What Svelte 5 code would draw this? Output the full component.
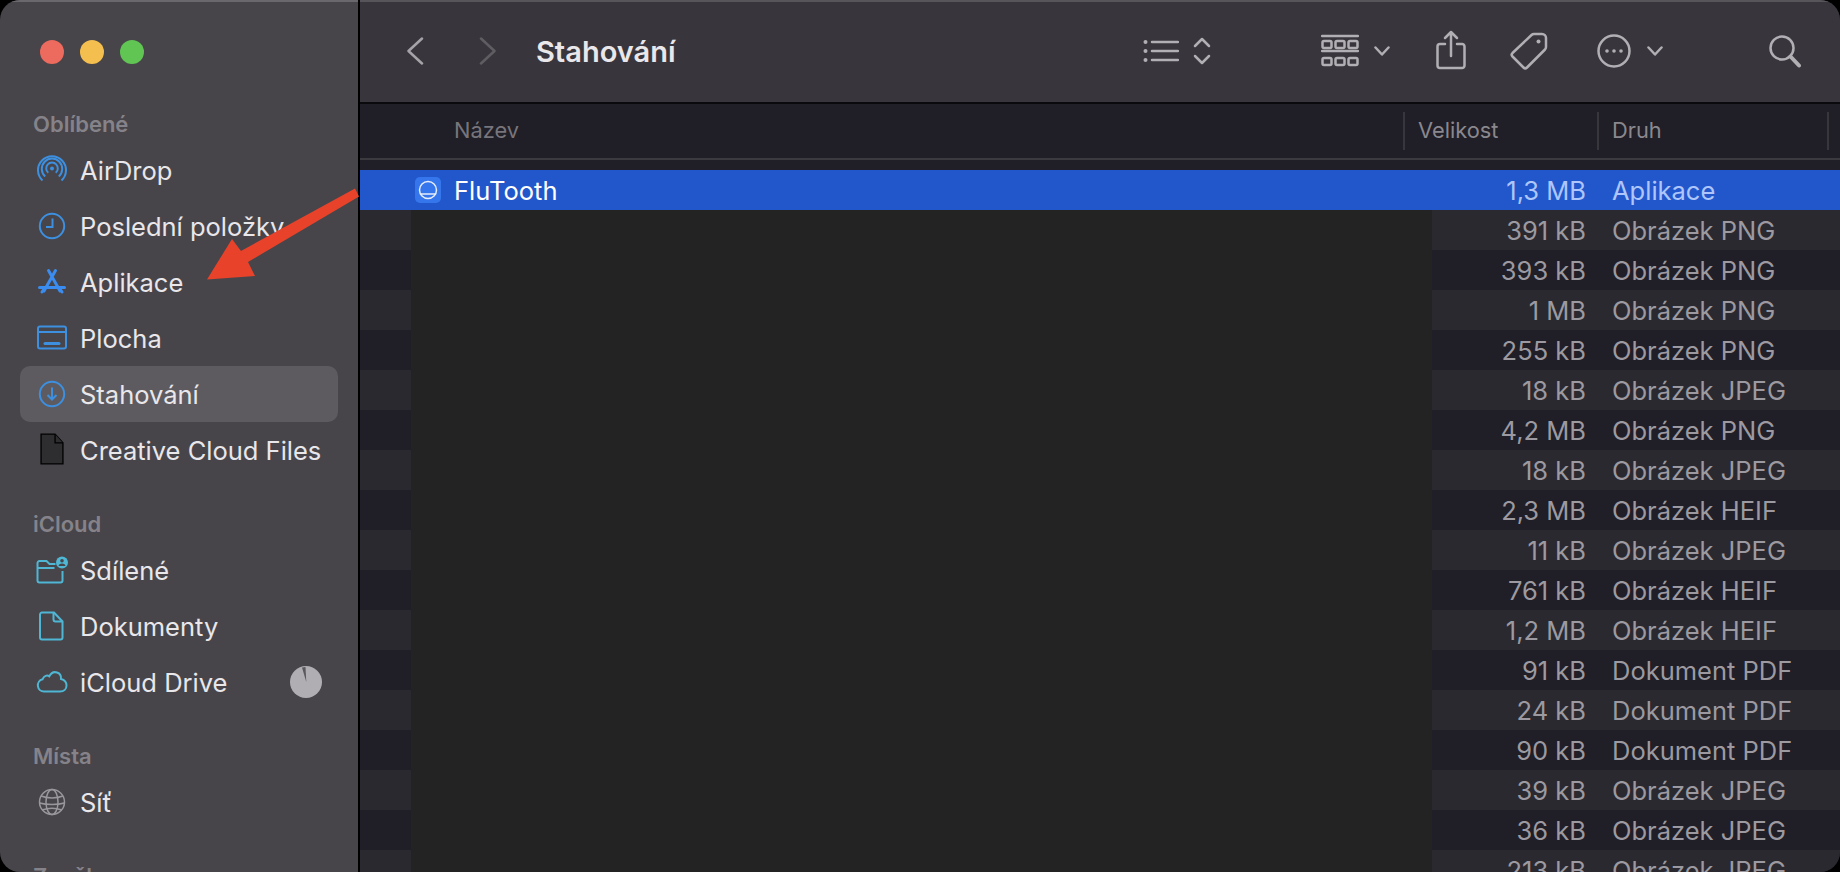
<script lang="ts">
	const files = [
		['391 kB', 'Obrázek PNG'],
		['393 kB', 'Obrázek PNG'],
		['1 MB', 'Obrázek PNG'],
		['255 kB', 'Obrázek PNG'],
		['18 kB', 'Obrázek JPEG'],
		['4,2 MB', 'Obrázek PNG'],
		['18 kB', 'Obrázek JPEG'],
		['2,3 MB', 'Obrázek HEIF'],
		['11 kB', 'Obrázek JPEG'],
		['761 kB', 'Obrázek HEIF'],
		['1,2 MB', 'Obrázek HEIF'],
		['91 kB', 'Dokument PDF'],
		['24 kB', 'Dokument PDF'],
		['90 kB', 'Dokument PDF'],
		['39 kB', 'Obrázek JPEG'],
		['36 kB', 'Obrázek JPEG'],
		['213 kB', 'Obrázek JPEG']
	];
</script>

<div class="window">
	<aside class="sidebar">
		<div class="lights">
			<span class="light red"></span>
			<span class="light yellow"></span>
			<span class="light green"></span>
		</div>

		<div class="section first">Oblíbené</div>
		<div class="item">
			<svg class="icon blue" viewBox="0 0 32 32">
				<circle class="blue-fill" cx="16" cy="14.500" r="2" />
				<path d="M12.300 18.800a5.800 5.800 0 1 1 7.400 0" />
				<path d="M9.200 22.400a10.200 10.200 0 1 1 13.600 0" />
				<path d="M6.500 26.500a14 14 0 1 1 19 0" />
			</svg>
			AirDrop
		</div>
		<div class="item">
			<svg class="icon blue" viewBox="0 0 32 32">
				<circle cx="16" cy="16" r="12.200" />
				<path d="M16.500 8.500V17H10" />
			</svg>
			Poslední položky
		</div>
		<div class="item">
			<svg class="icon bright" viewBox="0 0 32 32">
				<path class="thick" d="M12.500 4.500L24 25M19.500 4.500L8 25" />
				<path class="thick" d="M3.500 21.500h25" />
				<path class="thick" d="M6 26l2-3M26 26l-2-3" />
			</svg>
			Aplikace
		</div>
		<div class="item">
			<svg class="icon blue" viewBox="0 0 32 32">
				<rect x="2" y="4.500" width="28" height="22" rx="2" />
				<path d="M2 10h28" />
				<path class="thick" d="M9 21.500h14" />
			</svg>
			Plocha
		</div>
		<div class="item active">
			<svg class="icon blue" viewBox="0 0 32 32">
				<circle cx="16" cy="16" r="12.200" />
				<path d="M16 9.500v12M11.500 17l4.500 4.500 4.500-4.500" />
			</svg>
			Stahování
		</div>
		<div class="item">
			<svg class="icon doc" viewBox="0 0 32 36">
				<path d="M3.500 1h16l9 10v24h-25z" />
				<path d="M19.500 1v10h9" />
			</svg>
			Creative Cloud Files
		</div>

		<div class="section">iCloud</div>
		<div class="item">
			<svg class="icon teal" viewBox="0 0 32 32">
				<path d="M26.500 17v9.500a2 2 0 0 1-2 2H3.500a2 2 0 0 1-2-2V9a2 2 0 0 1 2-2h7l3 3h6M1.500 14h17" />
				<circle class="fill" cx="26" cy="8.500" r="6" />
				<circle class="cut" cx="26" cy="6.800" r="1.800" />
				<path class="cut" d="M22.500 12c.6-1.800 1.900-2.500 3.500-2.500s2.900.7 3.500 2.500z" />
			</svg>
			Sdílené
		</div>
		<div class="item">
			<svg class="icon teal" viewBox="0 0 32 32">
				<path d="M6 2.500h12l8.500 9v16a2 2 0 0 1-2 2H6a2 2 0 0 1-2-2v-23a2 2 0 0 1 2-2z" />
				<path d="M17.500 2.500v7a2 2 0 0 0 2 2h7" />
			</svg>
			Dokumenty
		</div>
		<div class="item">
			<svg class="icon teal" viewBox="0 0 32 32">
				<path d="M8 25.500a6.200 6.200 0 0 1-1.500-12.200C8 9.800 11 8.800 13.300 10.300 15 7 18 5.500 21 6.500c2.800.9 4.300 3.500 4 6.500 3 .8 5.500 3 5.500 6.500 0 3.500-2.500 6-6.500 6z" />
			</svg>
			iCloud Drive
			<svg class="pie" viewBox="0 0 32 32">
				<circle cx="16" cy="16" r="16" />
				<path d="M12 1.500l3.500-.5.800 15z" />
			</svg>
		</div>

		<div class="section">Místa</div>
		<div class="item">
			<svg class="icon grey" viewBox="0 0 32 32">
				<circle cx="16" cy="16" r="12.500" />
				<ellipse cx="16" cy="16" rx="6" ry="12.500" />
				<path d="M5 10c6 2.500 16 2.500 22 0M3.500 17c7 2 18 2 25 0M6 24c6-2 14-2 20 0" />
			</svg>
			Síť
		</div>

		<div class="section">Značky</div>
	</aside>

	<main class="main">
		<header class="toolbar">
			<svg class="back" viewBox="0 0 18 28"><path d="M16 1.500L2.500 14 16 26.500" /></svg>
			<svg class="forward" viewBox="0 0 18 28"><path d="M2 1.500L15.500 14 2 26.500" /></svg>
			<h1>Stahování</h1>

			<svg class="tool list" viewBox="0 0 36 26">
				<circle class="dot" cx="2.500" cy="4" r="2" />
				<circle class="dot" cx="2.500" cy="13" r="2" />
				<circle class="dot" cx="2.500" cy="22" r="2" />
				<path d="M9 4h26M9 13h26M9 22h26" />
			</svg>
			<svg class="tool updown" viewBox="0 0 18 28"><path d="M2 9l7-7 7 7M2 19l7 7 7-7" /></svg>
			<svg class="tool view" viewBox="0 0 38 34">
				<path d="M1 2h36M1 17h36" />
				<rect x="1.500" y="7" width="9" height="7" rx="1.500" />
				<rect x="14.500" y="7" width="9" height="7" rx="1.500" />
				<rect x="27.500" y="7" width="9" height="7" rx="1.500" />
				<rect x="1.500" y="24" width="9" height="7" rx="1.500" />
				<rect x="14.500" y="24" width="9" height="7" rx="1.500" />
				<rect x="27.500" y="24" width="9" height="7" rx="1.500" />
			</svg>
			<svg class="tool chev view-chev" viewBox="0 0 16 10"><path d="M1.500 1.500L8 8.500l6.500-7" /></svg>
			<svg class="tool share" viewBox="0 0 30 40">
				<path d="M9 14H4a2.500 2.500 0 0 0-2.500 2.500v19A2.500 2.500 0 0 0 4 38h22a2.500 2.500 0 0 0 2.500-2.500v-19A2.500 2.500 0 0 0 26 14h-5" />
				<path d="M15 26V2M9 8l6-6 6 6" />
			</svg>
			<svg class="tool tag" viewBox="0 0 38 38">
				<path d="M24 2h8a4 4 0 0 1 4 4v9a4 4 0 0 1-1 2.500L17 35.500a2.500 2.500 0 0 1-3.500 0L2.500 24.500a2.500 2.500 0 0 1 0-3.500L21.500 3a4 4 0 0 1 2.500-1z" />
				<circle class="dot" cx="28.500" cy="9.500" r="2" />
			</svg>
			<svg class="tool more" viewBox="0 0 34 34">
				<circle cx="17" cy="17" r="15.500" />
				<circle class="dot" cx="10" cy="17" r="1.800" />
				<circle class="dot" cx="17" cy="17" r="1.800" />
				<circle class="dot" cx="24" cy="17" r="1.800" />
			</svg>
			<svg class="tool chev more-chev" viewBox="0 0 16 10"><path d="M1.500 1.500L8 8.500l6.500-7" /></svg>
			<svg class="tool search" viewBox="0 0 34 34">
				<circle cx="14" cy="14" r="11.500" />
				<path class="heavy" d="M22.500 22.500L31 31.500" />
			</svg>
		</header>

		<div class="columns">
			<span class="col name">Název</span>
			<span class="col size">Velikost</span>
			<span class="col kind">Druh</span>
			<span class="col rest"></span>
		</div>

		<div class="list-body">
			<div class="row selected">
				<span class="name-cell">
					<svg class="app-icon" viewBox="0 0 26 26">
						<rect width="26" height="26" rx="5" />
						<circle cx="13" cy="13" r="8.500" />
						<path d="M5 17h16" />
					</svg>
					FluTooth
				</span>
				<span class="size-cell">1,3 MB</span>
				<span class="kind-cell">Aplikace</span>
			</div>
			{#each files as file, i}
				<div class="row" class:alt={i % 2 === 0}>
					<span class="name-cell"></span>
					<span class="size-cell">{file[0]}</span>
					<span class="kind-cell">{file[1]}</span>
				</div>
			{/each}
			<div class="redaction"></div>
		</div>
	</main>

	<svg class="arrow" viewBox="0 0 1840 872">
		<path d="M355 188.500L359 196.500L248 262L255 276L207 279.500L232 239L241 251z" />
	</svg>
</div>

<style>
	:global(body) {
		margin: 0;
		background: #000;
	}
	.window {
		position: relative;
		display: flex;
		width: 1840px;
		height: 872px;
		overflow: hidden;
		border-radius: 20px;
		background: #000;
		font-family: Inter, 'Liberation Sans', sans-serif;
		font-size: 25.500px;
	}
	.sidebar {
		flex: 0 0 358px;
		height: 872px;
		box-sizing: border-box;
		padding-top: 40px;
		overflow: hidden;
		background: #47454a;
		border-top: 2px solid #6a686d;
		color: #e9e7ea;
	}
	.lights {
		display: flex;
		gap: 16px;
		height: 24px;
		margin-top: -2px;
		padding-left: 40px;
	}
	.light {
		width: 24px;
		height: 24px;
		border-radius: 50%;
	}
	.red { background: #ec6a5e; }
	.yellow { background: #f4bf4f; }
	.green { background: #61c554; }

	.section {
		height: 20px;
		padding: 36px 0 8px 33px;
		line-height: 20px;
		font-size: 22px;
		font-weight: 600;
		color: #858389;
	}
	.section.first {
		padding-top: 50px;
	}
	.item {
		display: flex;
		align-items: center;
		position: relative;
		box-sizing: border-box;
		width: 318px;
		height: 56px;
		margin-left: 20px;
		padding-left: 60px;
		border-radius: 10px;
		white-space: nowrap;
	}
	.item.active {
		background: #5d5b60;
	}
	.icon {
		position: absolute;
		left: 16px;
		top: 12px;
		width: 32px;
		height: 32px;
		fill: none;
		stroke-width: 2;
	}
	.blue { stroke: #3d8fdf; }
	.blue-fill { fill: #3d8fdf; stroke: none; }
	.bright { stroke: #3b8cf0; }
	.teal { stroke: #4fb6d3; }
	.grey { stroke: #99979c; stroke-width: 1.500; }
	.thick { stroke-width: 3; stroke-linecap: round; }
	.doc {
		left: 18px;
		top: 9px;
		width: 28px;
		height: 36px;
		fill: #2e2d30;
		stroke: #000;
		stroke-width: 1.500;
	}
	.fill { fill: #4fb6d3; stroke: none; }
	.cut { fill: #47454a; stroke: none; }
	.pie {
		position: absolute;
		left: 270px;
		top: 12px;
		width: 32px;
		height: 32px;
		fill: #b0aeb3;
	}
	.pie path { fill: #5a585d; }

	.main {
		flex: 1;
		min-width: 0;
		margin-left: 2px;
		display: flex;
		flex-direction: column;
		background: #201e26;
	}
	.toolbar {
		position: relative;
		flex: 0 0 104px;
		box-sizing: border-box;
		display: flex;
		align-items: center;
		background: #38363c;
		border-top: 2px solid #57555a;
		border-bottom: 2px solid #0a090c;
		padding-left: 46px;
		padding-bottom: 2px;
	}
	.toolbar svg {
		flex: none;
		fill: none;
		stroke-width: 2.500;
		stroke-linecap: round;
		stroke-linejoin: round;
	}
	.tool { stroke: #b1afb4; }
	.back { width: 18px; height: 28px; stroke: #a5a3a8; }
	.forward { width: 18px; height: 28px; margin-left: 55px; stroke: #5f5d62; }
	h1 {
		margin: 0 0 0 39px;
		font-size: 29px;
		font-weight: 600;
		color: #e9e7ea;
		width: 607px;
		white-space: nowrap;
	}
	.dot { fill: #b1afb4; stroke: none; }
	.list { width: 36px; height: 26px; }
	.updown { width: 18px; height: 28px; margin-left: 14px; }
	.view { width: 38px; height: 34px; margin-left: 110px; }
	.chev { width: 16px; height: 10px; }
	.view-chev { margin-left: 15px; }
	.share { width: 30px; height: 40px; margin-left: 46px; margin-top: -3px; }
	.tag { width: 38px; height: 38px; margin-left: 44px; }
	.more { width: 34px; height: 34px; margin-left: 49px; }
	.more-chev { margin-left: 16px; }
	.search { width: 34px; height: 34px; margin-left: 105px; }
	.heavy { stroke-width: 4; }

	.columns {
		flex: 0 0 56px;
		box-sizing: border-box;
		display: grid;
		grid-template-columns: 1043px 194px 230px 13px;
		align-items: center;
		border-bottom: 2px solid #3b3a3f;
		font-size: 21.800px;
		color: #7f7d83;
	}
	.col {
		box-sizing: border-box;
		height: 38px;
		line-height: 36px;
		border-left: 2px solid #38363d;
		padding-left: 13px;
	}
	.col.name {
		border-left: 0;
		padding-left: 94px;
		color: #77757b;
	}
	.col.size, .col.kind {
		color: #8a888e;
	}

	.list-body {
		position: relative;
		flex: 1;
		overflow: hidden;
		padding-top: 10px;
		min-height: 0;
	}
	.row {
		display: grid;
		grid-template-columns: 1043px 194px 1fr;
		height: 40px;
		line-height: 42px;
		background: #201e27;
		color: #9c9aa0;
		white-space: nowrap;
	}
	.row.alt {
		background: #2a2930;
	}
	.row.selected {
		background: #2257cb;
		color: #aec6fb;
	}
	.name-cell {
		position: relative;
		padding-left: 94px;
		color: #fff;
	}
	.app-icon {
		position: absolute;
		left: 55px;
		top: 7px;
		width: 26px;
		height: 26px;
		fill: none;
		stroke: #e6edfb;
		stroke-width: 1.500;
	}
	.app-icon rect {
		fill: #3576ec;
		stroke: none;
	}
	.size-cell {
		text-align: right;
		padding-right: 11px;
	}
	.kind-cell {
		padding-left: 15px;
	}
	.redaction {
		position: absolute;
		left: 51px;
		top: 50px;
		width: 1021px;
		bottom: 0;
		background: #232323;
	}
	.arrow {
		position: absolute;
		inset: 0;
		width: 1840px;
		height: 872px;
		fill: #e8432a;
		pointer-events: none;
	}
</style>
